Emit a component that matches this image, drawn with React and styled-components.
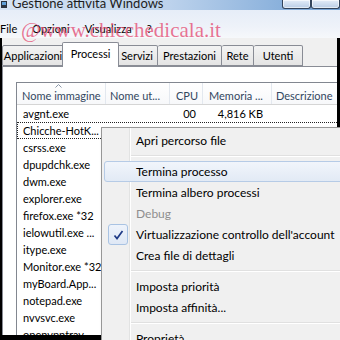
import React from 'react';
import styled, { createGlobalStyle } from 'styled-components';

const GlobalStyle = createGlobalStyle`
  html, body {
    margin: 0;
    padding: 0;
    background: #000;
  }
  body {
    font-family: Lato, "Noto Sans", sans-serif;
    color: #000;
  }
`;

const Screen = styled.div`
  position: relative;
  width: 340px;
  height: 340px;
  overflow: hidden;
  background: #000;
  display: flex;
  flex-direction: column;
`;

const TitleBar = styled.div`
  flex: none;
  height: 10px;
  display: flex;
  align-items: flex-end;
  overflow: hidden;
  background: linear-gradient(90deg, #d6e4f4 0%, #bcd2ec 50%, #6f9fd3 100%);
`;

const TitleIcon = styled.svg`
  flex: none;
  margin: 0 5px 2px 1px;
`;

const TitleText = styled.span`
  font-size: 13px;
  line-height: 12px;
  margin-bottom: 1px;
  color: #1d1d1d;
  white-space: nowrap;
`;

const WinButtons = styled.div`
  margin-left: auto;
  display: flex;
  align-self: flex-start;
`;

const WinButton = styled.div`
  width: ${p => p.$w}px;
  height: 8px;
  border: 1px solid #34445a;
  border-top: none;
  border-radius: 0 0 3px 3px;
  background: linear-gradient(#e4edf8, #b9cde6);
  box-shadow: inset 0 0 0 1px rgba(255, 255, 255, 0.6);
`;

const MenuBar = styled.div`
  flex: none;
  height: 28px;
  display: flex;
  align-items: flex-end;
  gap: 15px;
  padding-bottom: 1px;
  box-sizing: border-box;
  background: linear-gradient(#e6edf8 0%, #eef2f9 60%, #f6f8fb 100%);
`;

const MenuBarItem = styled.span`
  font-size: 11px;
  line-height: 16px;
  white-space: nowrap;
`;

const Watermark = styled.div`
  position: absolute;
  left: 21px;
  top: 20px;
  font-family: "Liberation Serif", "Times New Roman", serif;
  font-size: 21px;
  line-height: 21px;
  color: rgba(228, 78, 116, 0.78);
  white-space: nowrap;
  pointer-events: none;
`;

const Body = styled.div`
  flex: 1;
  min-height: 0;
  margin: 0 3px 5px 2px;
  background: #f0f0f0;
  display: flex;
  flex-direction: column;
  overflow: hidden;
`;

const TabStrip = styled.div`
  flex: none;
  height: 28px;
  display: flex;
  align-items: flex-end;
  position: relative;
  z-index: 1;
`;

const Tab = styled.div`
  flex: none;
  box-sizing: border-box;
  width: ${p => (p.$active ? p.$w + 4 : p.$w)}px;
  height: ${p => (p.$active ? 25 : 21)}px;
  margin: 0 ${p => (p.$active ? -2 : 0)}px ${p => (p.$active ? -1 : 0)}px;
  border: 1px solid #898c95;
  border-bottom: ${p => (p.$active ? 'none' : '1px solid #898c95')};
  border-left-width: ${p => (p.$first || p.$active ? 1 : 0)}px;
  border-radius: 2px 2px 0 0;
  background: ${p => (p.$active ? '#fff' : 'linear-gradient(#f3f3f3, #e4e4e4)')};
  position: relative;
  z-index: ${p => (p.$active ? 2 : 0)};
  display: flex;
  align-items: center;
  justify-content: center;
  padding-bottom: ${p => (p.$active ? 3 : 0)}px;
  font-size: 11px;
  white-space: nowrap;
`;

const TabPage = styled.div`
  flex: 1;
  min-height: 0;
  background: #fff;
  border-top: 1px solid #898c95;
  border-left: 1px solid #898c95;
  padding: 15px 0 0 13px;
  overflow: hidden;
`;

const ListBox = styled.div`
  width: 420px;
  border: 1px solid #828790;
  border-right: none;
  background: #fff;
  font-size: 11px;
`;

const cols = '89px 64px 33px 69px 165px';

const HeaderRow = styled.div`
  display: grid;
  grid-template-columns: ${cols};
  height: 21px;
  border-bottom: 1px solid #d5d5d5;
  background: linear-gradient(#ffffff, #f7f8fa);
`;

const HeaderCell = styled.div`
  position: relative;
  display: flex;
  align-items: center;
  padding-left: ${p => p.$pad}px;
  padding-top: 3px;
  border-right: 1px solid #e3e8ef;
  color: #33475f;
  white-space: nowrap;
  overflow: hidden;
`;

const SortArrow = styled.svg`
  position: absolute;
  left: 38px;
  top: 1px;
`;

const Row = styled.div`
  display: grid;
  grid-template-columns: ${cols};
  height: 17px;
  box-sizing: border-box;
  outline: ${p => (p.$focused ? '1px dotted #222' : 'none')};
  outline-offset: -1px;
`;

const Cell = styled.div`
  display: flex;
  align-items: center;
  justify-content: ${p => (p.$right ? 'flex-end' : 'flex-start')};
  padding: 0 ${p => (p.$right ? p.$pad : 0)}px 0 ${p => (p.$right ? 0 : 6)}px;
  white-space: nowrap;
  overflow: hidden;
`;

const ContextMenu = styled.div`
  position: absolute;
  left: 101px;
  top: 127px;
  width: 260px;
  height: 240px;
  box-sizing: border-box;
  padding: 2px;
  border: 1px solid #979797;
  background:
    linear-gradient(90deg, transparent 27px, #e2e3e3 27px, #e2e3e3 28px, #ffffff 28px, #ffffff 29px, transparent 29px),
    #f0f0f0;
  box-shadow: 2px 2px 3px rgba(0, 0, 0, 0.35);
  font-size: 12px;
  z-index: 5;
`;

const MenuItem = styled.div`
  position: relative;
  height: 21px;
  box-sizing: border-box;
  display: flex;
  align-items: center;
  padding-left: 31px;
  white-space: nowrap;
  color: ${p => (p.$disabled ? '#8e8e8e' : '#000')};
  border: 1px solid ${p => (p.$hover ? '#b6cbe6' : 'transparent')};
  border-radius: 3px;
  background: ${p => (p.$hover ? 'linear-gradient(#f1f5fb, #e2eaf5)' : 'transparent')};
`;

const CheckBox = styled.div`
  position: absolute;
  left: 3px;
  top: -1px;
  width: 20px;
  height: 21px;
  box-sizing: border-box;
  border: 1px solid #a9c3e3;
  border-radius: 3px;
  background: linear-gradient(#eef3fb, #dfe8f5);
  display: flex;
  align-items: center;
  justify-content: center;
`;

const Separator = styled.div`
  height: 10px;
  margin-left: 27px;
  display: flex;
  flex-direction: column;
  justify-content: center;
  &::before {
    content: '';
    display: block;
    height: 1px;
    background: #e0e0e0;
    border-bottom: 1px solid #fff;
  }
`;

const tabs = [
  { label: 'Applicazioni', w: 62 },
  { label: 'Processi', w: 53, active: true },
  { label: 'Servizi', w: 41 },
  { label: 'Prestazioni', w: 64 },
  { label: 'Rete', w: 32 },
  { label: 'Utenti', w: 49 },
];

const processes = [
  { name: 'avgnt.exe', cpu: '00', mem: '4,816 KB' },
  { name: 'Chicche-HotK...', focused: true },
  { name: 'csrss.exe' },
  { name: 'dpupdchk.exe' },
  { name: 'dwm.exe' },
  { name: 'explorer.exe' },
  { name: 'firefox.exe *32' },
  { name: 'ielowutil.exe ...' },
  { name: 'itype.exe' },
  { name: 'Monitor.exe *32' },
  { name: 'myBoard.App...' },
  { name: 'notepad.exe' },
  { name: 'nvvsvc.exe' },
  { name: 'openvpntray...' },
];

const menu = [
  { label: 'Apri percorso file' },
  { sep: true },
  { label: 'Termina processo', hover: true },
  { label: 'Termina albero processi' },
  { label: 'Debug', disabled: true },
  { label: "Virtualizzazione controllo dell'account", checked: true },
  { label: 'Crea file di dettagli' },
  { sep: true },
  { label: 'Imposta priorità' },
  { label: 'Imposta affinità...' },
  { sep: true },
  { label: 'Proprietà' },
];

export default function App() {
  return (
    <Screen>
      <GlobalStyle />
      <TitleBar>
        <TitleIcon width="6" height="7" viewBox="0 0 6 7">
          <rect x="0" y="0" width="6" height="7" fill="#2b3440" />
          <rect x="1" y="1" width="4" height="3" fill="#5fa0d8" />
        </TitleIcon>
        <TitleText>Gestione attività Windows</TitleText>
        <WinButtons>
          <WinButton $w={27} />
          <WinButton $w={27} />
        </WinButtons>
      </TitleBar>
      <MenuBar>
        <MenuBarItem>File</MenuBarItem>
        <MenuBarItem>Opzioni</MenuBarItem>
        <MenuBarItem>Visualizza</MenuBarItem>
        <MenuBarItem>?</MenuBarItem>
      </MenuBar>
      <Body>
        <TabStrip>
          {tabs.map((t, i) => (
            <Tab key={t.label} $w={t.w} $active={t.active} $first={i === 0}>
              {t.label}
            </Tab>
          ))}
        </TabStrip>
        <TabPage>
          <ListBox>
            <HeaderRow>
              <HeaderCell $pad={5}>
                <SortArrow width="7" height="4" viewBox="0 0 7 4">
                  <path d="M0.5 3.5 L3.5 0.5 L6.5 3.5" fill="none" stroke="#8a97a8" strokeWidth="1" />
                </SortArrow>
                Nome immagine
              </HeaderCell>
              <HeaderCell $pad={4}>Nome ut...</HeaderCell>
              <HeaderCell $pad={6}>CPU</HeaderCell>
              <HeaderCell $pad={6}>Memoria ...</HeaderCell>
              <HeaderCell $pad={4}>Descrizione</HeaderCell>
            </HeaderRow>
            {processes.map(p => (
              <Row key={p.name} $focused={p.focused}>
                <Cell>{p.name}</Cell>
                <Cell />
                <Cell $right $pad={7}>{p.cpu}</Cell>
                <Cell $right $pad={9}>{p.mem}</Cell>
                <Cell />
              </Row>
            ))}
          </ListBox>
        </TabPage>
      </Body>
      <Watermark>@www.chicchedicala.it</Watermark>
      <ContextMenu>
        {menu.map((m, i) =>
          m.sep ? (
            <Separator key={i} />
          ) : (
            <MenuItem key={i} $hover={m.hover} $disabled={m.disabled}>
              {m.checked && (
                <CheckBox>
                  <svg width="11" height="10" viewBox="0 0 11 10">
                    <path d="M1.5 5.5 L4 8.5 L9.5 1" fill="none" stroke="#1f3a86" strokeWidth="1.7" />
                  </svg>
                </CheckBox>
              )}
              {m.label}
            </MenuItem>
          )
        )}
      </ContextMenu>
    </Screen>
  );
}
